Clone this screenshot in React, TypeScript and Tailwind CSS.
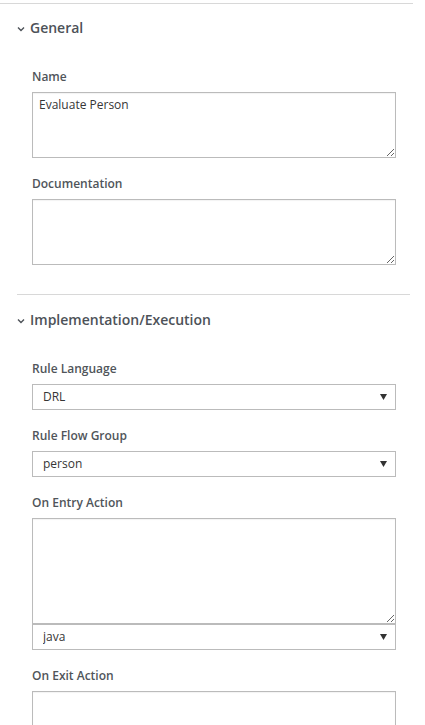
import { useState } from "react";

function Chevron() {
  return (
    <svg width="8" height="6" viewBox="0 0 8 6" className="mr-[5px] mt-[1px]">
      <path d="M1 1.5 L4 4.5 L7 1.5" fill="none" stroke="#4d5258" strokeWidth="1.4" />
    </svg>
  );
}

function Heading({ title }: { title: string }) {
  return (
    <div className="flex items-center pl-[17px] h-[20px] text-[14px] font-semibold text-[#4d5258] leading-[20px]">
      <Chevron />
      {title}
    </div>
  );
}

function Label({ children }: { children: React.ReactNode }) {
  return (
    <div className="text-[12px] font-semibold text-[#50555a] leading-[17px] mb-[7px]">{children}</div>
  );
}

function Select({ value, options }: { value: string; options: string[] }) {
  const [v, setV] = useState(value);
  return (
    <div className="relative w-[364px] h-[26px]">
      <select
        value={v}
        onChange={(e) => setV(e.target.value)}
        className="block appearance-none w-full h-full border border-[#bbbbbb] bg-white pl-[10px] text-[12px] text-[#363636] outline-none rounded-none"
      >
        {options.map((o) => (
          <option key={o} value={o}>{o}</option>
        ))}
      </select>
      <svg width="7" height="6" viewBox="0 0 7 6" className="absolute right-[9px] top-[10px] pointer-events-none">
        <path d="M0 0 H7 L3.5 6 Z" fill="#333" />
      </svg>
    </div>
  );
}

function Area({ value = "", height }: { value?: string; height: string }) {
  return (
    <textarea
      defaultValue={value}
      className={`block w-[364px] ${height} border border-[#bbbbbb] px-[6px] py-[3px] text-[12px] leading-[17px] text-[#363636] outline-none shadow-[inset_0_1px_1px_rgba(0,0,0,0.05)]`}
    />
  );
}

export default function App() {
  return (
    <div className="w-[425px] min-h-[725px] bg-white font-['Open_Sans',sans-serif]">
      <div className="pt-[3px]">
        <div className="h-px w-[413px] bg-[#d8d8d8]" />
      </div>

      {/* General */}
      <div className="mt-[14px]">
        <Heading title="General" />
        <div className="pl-[32px] pt-[30px]">
          <Label>Name</Label>
          <Area value="Evaluate Person" height="h-[66px]" />
          <div className="mt-[17px]">
            <Label>Documentation</Label>
            <Area height="h-[66px]" />
          </div>
        </div>
      </div>

      <div className="mt-[29px] ml-[17px] h-px w-[393px] bg-[#d8d8d8]" />

      {/* Implementation/Execution */}
      <div className="mt-[15px]">
        <Heading title="Implementation/Execution" />
        <div className="pl-[32px] pt-[30px]">
          <Label>Rule Language</Label>
          <Select value="DRL" options={["DRL", "DMN", "Java"]} />
          <div className="mt-[17px]">
            <Label>Rule Flow Group</Label>
            <Select value="person" options={["person", "default"]} />
          </div>
          <div className="mt-[17px]">
            <Label>On Entry Action</Label>
            <Area height="h-[106px]" />
            <Select value="java" options={["java", "mvel", "javascript"]} />
          </div>
          <div className="mt-[17px]">
            <Label>On Exit Action</Label>
            <Area height="h-[106px]" />
            <Select value="java" options={["java", "mvel", "javascript"]} />
          </div>
        </div>
      </div>
    </div>
  );
}
